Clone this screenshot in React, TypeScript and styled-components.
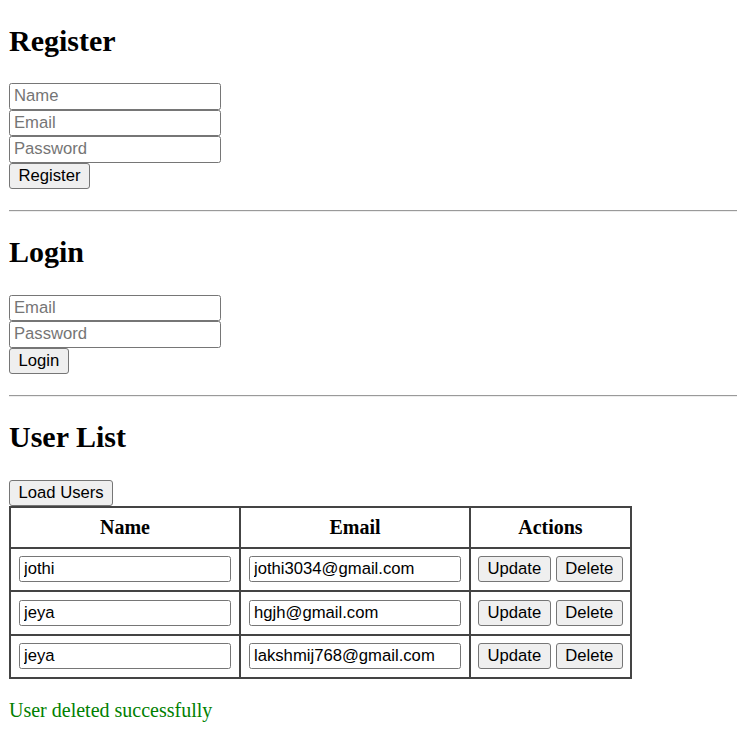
import React from 'react';
import styled, { createGlobalStyle } from 'styled-components';

type User = { name: string; email: string };

const users: User[] = [
  { name: 'jothi', email: 'jothi3034@gmail.com' },
  { name: 'jeya', email: 'hgjh@gmail.com' },
  { name: 'jeya', email: 'lakshmij768@gmail.com' },
];

const App: React.FC = () => {
  return (
    <Page>
      <GlobalStyle />
      <Section>
        <Title>Register</Title>
        <Form>
          <Field placeholder="Name" />
          <Field placeholder="Email" />
          <Field type="password" placeholder="Password" />
          <Button>Register</Button>
        </Form>
      </Section>
      <Rule />
      <Section>
        <Title>Login</Title>
        <Form>
          <Field placeholder="Email" />
          <Field type="password" placeholder="Password" />
          <Button>Login</Button>
        </Form>
      </Section>
      <Rule />
      <Section>
        <Title>User List</Title>
        <Button>Load Users</Button>
        <Table>
          <thead>
            <tr>
              <Th>Name</Th>
              <Th>Email</Th>
              <Th>Actions</Th>
            </tr>
          </thead>
          <tbody>
            {users.map((u, i) => (
              <tr key={i}>
                <Td>
                  <CellField defaultValue={u.name} />
                </Td>
                <Td>
                  <CellField defaultValue={u.email} />
                </Td>
                <Td $tight>
                  <Actions>
                    <Button>Update</Button>
                    <Button>Delete</Button>
                  </Actions>
                </Td>
              </tr>
            ))}
          </tbody>
        </Table>
        <Message>User deleted successfully</Message>
      </Section>
    </Page>
  );
};

const GlobalStyle = createGlobalStyle`
  body {
    margin: 0;
    background: #fff;
    font-family: "Liberation Serif", "Times New Roman", serif;
    color: #000;
  }
`;

const Page = styled.div`
  padding: 0 0 0 9px;
  overflow: hidden;
`;

const Section = styled.div`
  display: flex;
  flex-direction: column;
  align-items: flex-start;
`;

const Title = styled.h2`
  margin: 23.5px 0 25px;
  font-size: 30px;
  font-weight: bold;
  line-height: 34.5px;
`;

const Form = styled.div`
  display: flex;
  flex-direction: column;
  align-items: flex-start;
`;

const Field = styled.input`
  box-sizing: border-box;
  width: 212px;
  height: 26.5px;
  margin: 0;
  padding: 0 4px;
  border: 1px solid #767676;
  border-radius: 2.5px;
  font-family: "Liberation Sans", Arial, sans-serif;
  font-size: 16.67px;
  color: #000;
  background: #fff;

  &::placeholder {
    color: #757575;
  }
`;

const CellField = styled(Field)`
  display: block;
  height: 26px;
`;

const Button = styled.button`
  box-sizing: border-box;
  height: 26px;
  margin: 0;
  padding: 0 8.5px;
  border: 1px solid #767676;
  border-radius: 3px;
  background: #efefef;
  font-family: "Liberation Sans", Arial, sans-serif;
  font-size: 16.67px;
  color: #000;
`;

const Rule = styled.hr`
  margin: 21px 0 0;
  border: none;
  border-top: 1px solid #9a9a9a;
  border-bottom: 1px solid #eeeeee;
  height: 0;
`;

const Table = styled.table`
  border-collapse: collapse;
  border: 2px solid #444;
`;

const Th = styled.th`
  border: 2px solid #444;
  padding: 8px;
  font-size: 20px;
  line-height: 23px;
  font-weight: bold;
  text-align: center;
`;

const Td = styled.td<{ $tight?: boolean }>`
  border: 2px solid #444;
  padding: ${(p) => (p.$tight ? '7.5px 7px 8px' : '7.5px 8px 8px')};
`;

const Actions = styled.div`
  display: flex;
  gap: 5px;
`;

const Message = styled.p`
  margin: 20px 0;
  font-size: 20px;
  line-height: 23px;
  color: #008000;
`;

export default App;
